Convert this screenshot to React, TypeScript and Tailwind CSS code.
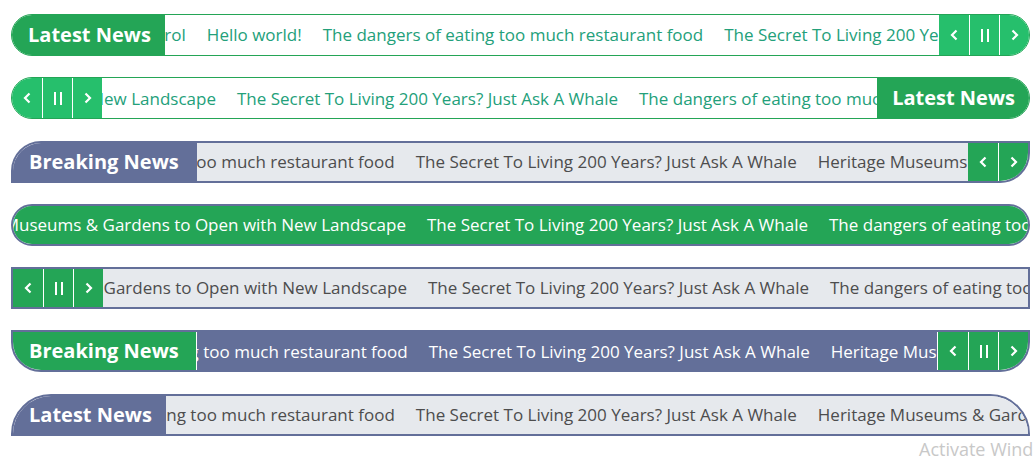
import React from "react";

const A = "Heritage Museums & Gardens to Open with New Landscape";
const B = "The Secret To Living 200 Years? Just Ask A Whale";
const C = "The dangers of eating too much restaurant food";
const D = "Hello world!";
const E = "Take Control";

const Prev = () => (
  <svg width="8" height="12" viewBox="0 0 8 12" fill="none">
    <path d="M6.5 1.5 L2 6 L6.5 10.5" stroke="white" strokeWidth="2.2" />
  </svg>
);

const Next = () => (
  <svg width="8" height="12" viewBox="0 0 8 12" fill="none">
    <path d="M1.5 1.5 L6 6 L1.5 10.5" stroke="white" strokeWidth="2.2" />
  </svg>
);

const Pause = () => (
  <span className="flex gap-[4px]">
    <span className="block w-[2px] h-[13px] bg-white" />
    <span className="block w-[2px] h-[13px] bg-white" />
  </span>
);

// prev / pause / next buttons, white dividers between them
const Controls = ({ bg, pause = true, className = "" }: { bg: string; pause?: boolean; className?: string }) => (
  <div className={`flex shrink-0 h-full ${bg} ${className}`}>
    <div className="w-[30px] flex items-center justify-center">
      <Prev />
    </div>
    {pause && (
      <div className="w-[30px] flex items-center justify-center border-l border-white">
        <Pause />
      </div>
    )}
    <div className="w-[30px] flex items-center justify-center border-l border-white">
      <Next />
    </div>
  </div>
);

const Label = ({ text, className }: { text: string; className: string }) => (
  <div className={`flex shrink-0 h-full items-center text-white font-bold text-[20px] ${className}`}>
    {text}
  </div>
);

// scrolling strip, first item is cut off on the left
const Track = ({
  items,
  lead,
  className,
}: {
  items: string[];
  lead: string;
  className: string;
}) => (
  <div className={`flex flex-1 min-w-0 h-full items-center overflow-hidden whitespace-nowrap text-[17px] ${className}`}>
    <div className="flex shrink-0 justify-end overflow-hidden pr-[21px]" style={{ width: lead }}>
      <span className="shrink-0">{items[0]}</span>
    </div>
    {items.slice(1).map((t, i) => (
      <span key={i} className="shrink-0 pr-[21px]">
        {t}
      </span>
    ))}
  </div>
);

export default function App() {
  return (
    <div
      className="relative w-[1033px] h-[464px] overflow-hidden bg-white"
      style={{ fontFamily: '"Open Sans", "Noto Sans", sans-serif' }}
    >
      <div className="flex flex-col gap-[21.3px] pt-[14px] pl-[11px] w-[1030px]">
        {/* 1 */}
        <div className="flex h-[42px] border border-[#24a556] rounded-full overflow-hidden">
          <Label text="Latest News" className="bg-[#24a556] pl-[16px] pr-[14px]" />
          <Track items={[E, D, C, B]} lead="42px" className="bg-white text-[#23a07a]" />
          <Controls bg="bg-[#26bf6c]" />
        </div>

        {/* 2 */}
        <div className="flex h-[42px] border border-[#24a556] rounded-full overflow-hidden">
          <Controls bg="bg-[#26bf6c]" />
          <Track items={[A, B, C]} lead="135px" className="bg-white text-[#23a07a]" />
          <Label text="Latest News" className="bg-[#24a556] pl-[15px] pr-[14px]" />
        </div>

        {/* 3 */}
        <div className="flex h-[42px] border-2 border-[#636f99] rounded-tl-[30px] rounded-br-[30px] overflow-hidden">
          <Label text="Breaking News" className="bg-[#636f99] pl-[16px] pr-[18px]" />
          <Track items={[C, B, A]} lead="219px" className="bg-[#e6e9ed] text-[#4d4d4d]" />
          <Controls bg="bg-[#24a556]" pause={false} />
        </div>

        {/* 4 */}
        <div className="flex h-[42px] border-2 border-[#636f99] rounded-full overflow-hidden">
          <Track items={[A, B, C]} lead="414px" className="bg-[#24a556] text-white" />
        </div>

        {/* 5 */}
        <div className="flex h-[42px] border-2 border-[#636f99] overflow-hidden">
          <Controls bg="bg-[#24a556]" />
          <Track items={[A, B, C]} lead="325px" className="bg-[#e6e9ed] text-[#4d4d4d]" />
        </div>

        {/* 6 */}
        <div className="flex h-[42px] border-2 border-[#636f99] rounded-bl-[30px] rounded-br-[30px] overflow-hidden">
          <Label text="Breaking News" className="bg-[#24a556] pl-[16px] pr-[17px] border-r border-white" />
          <Track items={[C, B, A]} lead="232px" className="bg-[#636f99] text-white" />
          <Controls bg="bg-[#24a556]" className="border-l border-white" />
        </div>

        {/* 7 */}
        <div className="flex h-[42px] border-2 border-[#636f99] rounded-tl-[40px] rounded-tr-[40px] overflow-hidden">
          <Label text="Latest News" className="bg-[#636f99] pl-[16px] pr-[14px]" />
          <Track items={[C, B, A]} lead="250px" className="bg-[#e6e9ed] text-[#4d4d4d]" />
        </div>
      </div>

      <div className="absolute left-[919px] top-[436px] text-[18px] text-[#c8c8c8] whitespace-nowrap">
        Activate Windows
      </div>
    </div>
  );
}
